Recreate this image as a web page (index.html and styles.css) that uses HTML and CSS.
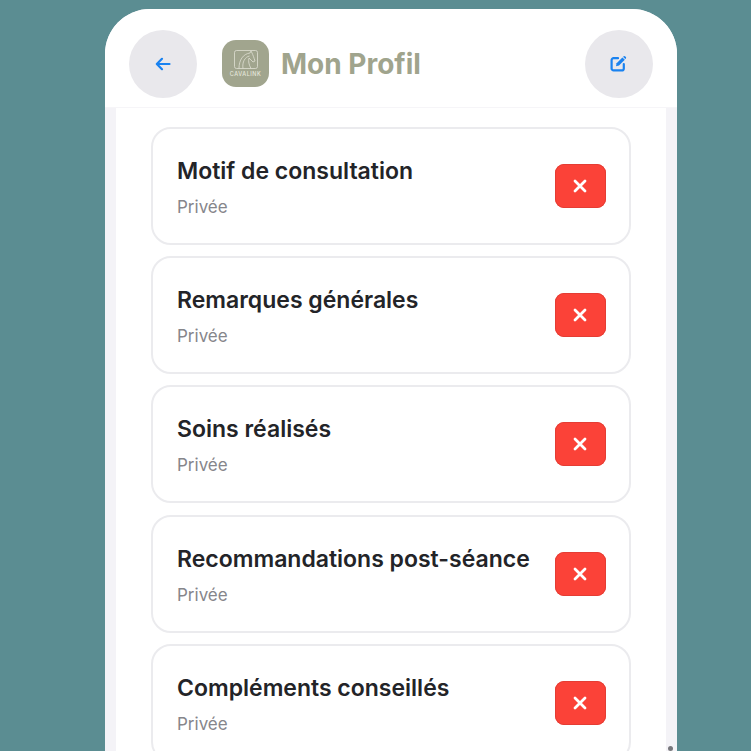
FILE: index.html
```html
<!DOCTYPE html>
<html lang="fr">
<head>
<meta charset="utf-8">
<title>Mon Profil</title>
<link rel="stylesheet" href="styles.css">
</head>
<body>
<main class="phone">
  <header class="header">
    <button class="round" aria-label="Retour">
      <svg width="16" height="14" viewBox="0 0 16 14" fill="none" stroke="#1a82f0" stroke-width="2.2" stroke-linecap="round" stroke-linejoin="round"><path d="M14.5 7H2M7 1.8 1.8 7 7 12.2"/></svg>
    </button>
    <div class="brand">
      <div class="logo">
        <svg width="24" height="19" viewBox="0 0 24 19" fill="none" stroke="#dfe0d3" stroke-width=".8"><rect x=".5" y=".5" width="23" height="18" rx="2"/><path d="M5 18.5C5 10 9 4 16 3l1-2 1 2c1 2 2 5 3 8l-2 1-4-4c-1 3 0 7 2 10.5M9 18.5C8 12 11 7 15.5 6"/></svg>
        <span class="logo-text">CAVALINK</span>
      </div>
      <h1 class="title">Mon Profil</h1>
    </div>
    <button class="round" aria-label="Modifier">
      <svg class="edit-icon" width="17" height="17" viewBox="0 0 17 17" fill="none"><path d="M8 3.2H3.6A2 2 0 0 0 1.6 5.2v8.2a2 2 0 0 0 2 2h8.2a2 2 0 0 0 2-2V9.2" stroke="#1a82f0" stroke-width="2.2" stroke-linecap="round"/><path d="M6 11.2l.6-3L12.4 2.4l2.4 2.4L9 10.6z" fill="#1a82f0"/><path d="M13.4 1.4a1.3 1.3 0 0 1 1.9 0l.4.4a1.3 1.3 0 0 1 0 1.9l-.4.4-2.3-2.3z" fill="#1a82f0"/></svg>
    </button>
  </header>
  <section class="content">
    <div class="list">
      <article class="card">
        <div class="card-text"><h2 class="card-title">Motif de consultation</h2><p class="card-sub">Privée</p></div>
        <button class="del" aria-label="Supprimer"><svg class="del-icon" width="14" height="14" viewBox="0 0 14 14" stroke="#fff" stroke-width="2.8" stroke-linecap="round"><path d="M2 2l10 10M12 2 2 12"/></svg></button>
      </article>
      <article class="card">
        <div class="card-text"><h2 class="card-title">Remarques générales</h2><p class="card-sub">Privée</p></div>
        <button class="del" aria-label="Supprimer"><svg class="del-icon" width="14" height="14" viewBox="0 0 14 14" stroke="#fff" stroke-width="2.8" stroke-linecap="round"><path d="M2 2l10 10M12 2 2 12"/></svg></button>
      </article>
      <article class="card">
        <div class="card-text"><h2 class="card-title">Soins réalisés</h2><p class="card-sub">Privée</p></div>
        <button class="del" aria-label="Supprimer"><svg class="del-icon" width="14" height="14" viewBox="0 0 14 14" stroke="#fff" stroke-width="2.8" stroke-linecap="round"><path d="M2 2l10 10M12 2 2 12"/></svg></button>
      </article>
      <article class="card">
        <div class="card-text"><h2 class="card-title">Recommandations post-séance</h2><p class="card-sub">Privée</p></div>
        <button class="del" aria-label="Supprimer"><svg class="del-icon" width="14" height="14" viewBox="0 0 14 14" stroke="#fff" stroke-width="2.8" stroke-linecap="round"><path d="M2 2l10 10M12 2 2 12"/></svg></button>
      </article>
      <article class="card">
        <div class="card-text"><h2 class="card-title">Compléments conseillés</h2><p class="card-sub">Privée</p></div>
        <button class="del" aria-label="Supprimer"><svg class="del-icon" width="14" height="14" viewBox="0 0 14 14" stroke="#fff" stroke-width="2.8" stroke-linecap="round"><path d="M2 2l10 10M12 2 2 12"/></svg></button>
      </article>
    </div>
  </section>
  <span class="scroll-dot"></span>
</main>
</body>
</html>
```
FILE: styles.css
```css
* { box-sizing: border-box; }
html, body { margin: 0; height: 751px; overflow: hidden; }
body {
  background: #5b8d92;
  font-family: Inter, "Noto Sans", sans-serif;
  padding: 9px 0 0 105px;
}
.phone {
  position: relative;
  width: 572px;
  height: 742px;
  background: #f4f3f7;
  border-radius: 45px 45px 0 0;
  overflow: hidden;
}
.header {
  height: 99px;
  background: #fff;
  padding: 21px 24px 0 24px;
  display: flex;
  align-items: flex-start;
  border-bottom: 1px solid #f6f5f8;
}
.round {
  flex: none;
  width: 68px;
  height: 68px;
  border: 0;
  padding: 0;
  border-radius: 50%;
  background: #e9e8ec;
  display: flex;
  align-items: center;
  justify-content: center;
}
.edit-icon { margin: 0 2px 2px 0; }
.brand {
  flex: 1;
  display: flex;
  align-items: center;
  height: 68px;
  margin-left: 25px;
  gap: 12px;
}
.logo {
  width: 47px;
  height: 47px;
  margin-top: -2px;
  border-radius: 14px;
  background: #a1a58e;
  display: flex;
  flex-direction: column;
  align-items: center;
  padding-top: 10px;
}
.logo-text {
  font-size: 5.5px;
  line-height: 7px;
  letter-spacing: .5px;
  color: #e6e7dc;
  font-weight: 500;
  margin-top: 2px;
}
.title {
  margin: 0;
  font-size: 28px;
  font-weight: 700;
  color: #a0a48d;
}
.content {
  margin: 0 11px;
  height: 643px;
  background: #fff;
  padding: 19px 35px 0 35px;
}
.list {
  display: flex;
  flex-direction: column;
  gap: 11.2px;
}
.card {
  flex: none;
  height: 118px;
  border: 2px solid #ebebee;
  border-radius: 20px;
  background: #fff;
  display: flex;
  align-items: center;
  padding: 0 23px 0 24px;
}
.card-text { flex: 1; min-width: 0; padding-top: 3px; }
.card-title {
  margin: 0;
  font-size: 23px;
  line-height: 28px;
  font-weight: 600;
  color: #232428;
}
.card-sub {
  margin: 11px 0 0;
  font-size: 17px;
  line-height: 22px;
  color: #86868b;
}
.del {
  flex: none;
  width: 51px;
  height: 44px;
  border: 0;
  padding: 0;
  border-radius: 9px;
  background: #fb4238;
  box-shadow: inset 0 0 0 1px #e43d34;
  display: flex;
  align-items: center;
  justify-content: center;
}
.del-icon { margin: 0 2px 0 0; }
.scroll-dot {
  position: absolute;
  right: 4px;
  bottom: 0;
  width: 5px;
  height: 5px;
  border-radius: 50%;
  background: #77777c;
}
```
